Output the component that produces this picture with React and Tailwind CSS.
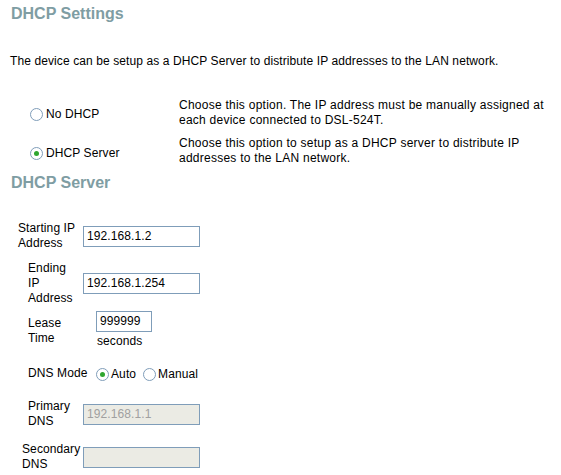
import React from 'react';

const font = { fontFamily: '"Liberation Sans", Arial, sans-serif' };

function Radio({ checked }) {
     return (
          <span className="inline-flex h-[13px] w-[13px] shrink-0 items-center justify-center rounded-full border border-[#7f9db9] bg-white">
               {checked && <span className="h-[5px] w-[5px] rounded-full bg-[#2fa62f]" />}
          </span>
     );
}

function Field({ value, disabled, className = 'w-[117px]' }) {
     return (
          <div
               className={`flex h-[21px] items-center border border-[#7f9db9] px-[3px] text-[12px] leading-[15px] ${className} ${
                    disabled ? 'bg-[#ebebe4] text-[#a0a0a0]' : 'bg-white text-black'
               }`}
          >
               {value}
          </div>
     );
}

export default function App() {
     return (
          <div className="h-[475px] w-[561px] overflow-hidden bg-white text-[12px] leading-[15px] tracking-[0.1px] text-black" style={font}>
               {/* DHCP Settings */}
               <h1 className="pl-[11px] pt-[4px] text-[16px] font-bold leading-[19px] tracking-normal text-[#7f9da3]">DHCP Settings</h1>
               <p className="mt-[31px] pl-[10px] leading-[15px]">
                    The device can be setup as a DHCP Server to distribute IP addresses to the LAN network.
               </p>

               <div className="mt-[29px] flex flex-col gap-[8px]">
                    <div className="flex items-center">
                         <label className="flex w-[179px] items-center gap-[3px] pl-[30px] pt-[3px]">
                              <Radio />
                              <span>No DHCP</span>
                         </label>
                         <p className="w-[372px] leading-[15px] tracking-[0.25px]">
                              Choose this option. The IP address must be manually assigned at each device connected to DSL-524T.
                         </p>
                    </div>
                    <div className="flex items-center">
                         <label className="flex w-[179px] items-center gap-[3px] pl-[30px] pt-[4px]">
                              <Radio checked />
                              <span>DHCP Server</span>
                         </label>
                         <p className="w-[350px] leading-[15px] tracking-[0.25px]">
                              Choose this option to setup as a DHCP server to distribute IP addresses to the LAN network.
                         </p>
                    </div>
               </div>

               {/* DHCP Server */}
               <h2 className="mt-[7px] pl-[11px] text-[16px] font-bold leading-[19px] tracking-normal text-[#7f9da3]">DHCP Server</h2>

               <div className="mt-[29px] flex flex-col">
                    <div className="flex items-center">
                         <div className="w-[83px] pl-[18px]">
                              Starting IP
                              <br />
                              Address
                         </div>
                         <Field value="192.168.1.2" />
                    </div>
                    <div className="mt-[10px] flex items-center">
                         <div className="w-[83px] pl-[28px]">
                              Ending
                              <br />
                              IP
                              <br />
                              Address
                         </div>
                         <Field value="192.168.1.254" />
                    </div>
                    <div className="mt-[5px] flex items-start">
                         <div className="w-[96px] pl-[28px] pt-[5px]">
                              Lease
                              <br />
                              Time
                         </div>
                         <div className="flex flex-col">
                              <Field value="999999" className="w-[56px]" />
                              <span className="mt-[2px] pl-[1px]">seconds</span>
                         </div>
                    </div>
                    <div className="mt-[16px] flex items-center">
                         <div className="w-[96px] pl-[28px]">DNS Mode</div>
                         <label className="flex items-center gap-[2px] pt-[2px]">
                              <Radio checked />
                              <span>Auto</span>
                         </label>
                         <label className="ml-[7px] flex items-center gap-[2px] pt-[2px]">
                              <Radio />
                              <span>Manual</span>
                         </label>
                    </div>
                    <div className="mt-[17px] flex items-center">
                         <div className="w-[83px] pl-[28px]">
                              Primary
                              <br />
                              DNS
                         </div>
                         <Field value="192.168.1.1" disabled />
                    </div>
                    <div className="mt-[13px] flex items-center">
                         <div className="w-[83px] pl-[22px]">
                              Secondary
                              <br />
                              DNS
                         </div>
                         <Field value="" disabled />
                    </div>
               </div>
          </div>
     );
}
